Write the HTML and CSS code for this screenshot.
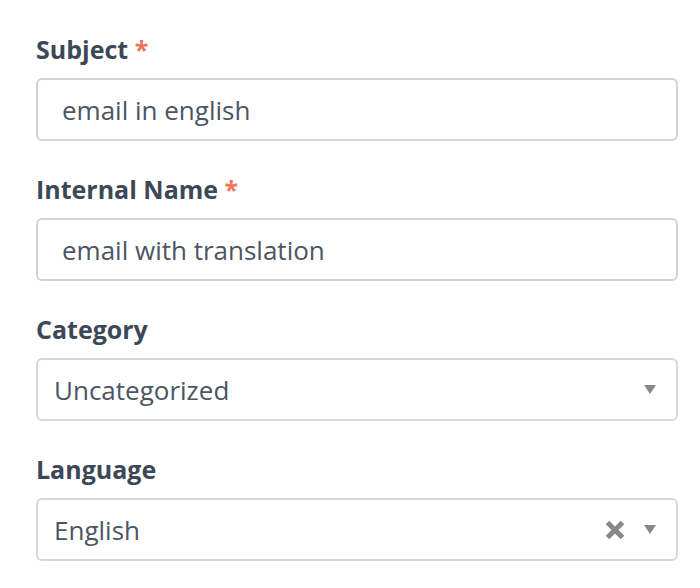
FILE: index.html
```html
<!DOCTYPE html>
<html>

<head>
    <meta charset="UTF-8">
    <meta name="viewport" content="width=device-width, initial-scale=1.0">
    <title>Email settings</title>
    <link rel="stylesheet" href="styles.css">
</head>

<body>
    <form class="form">
        <div class="field">
            <label for="subject">Subject <span class="required">*</span></label>
            <input type="text" id="subject" class="text-input" value="email in english">
        </div>
        <div class="field">
            <label for="internalName">Internal Name <span class="required">*</span></label>
            <input type="text" id="internalName" class="text-input" value="email with translation">
        </div>
        <div class="field">
            <label>Category</label>
            <div class="select">
                <span class="select-value">Uncategorized</span>
                <span class="arrow"></span>
            </div>
        </div>
        <div class="field">
            <label>Language</label>
            <div class="select">
                <span class="select-value">English</span>
                <svg class="clear" width="20" height="20" viewBox="0 0 20 20">
                    <path d="M2.5 2.5 L17.5 17.5 M17.5 2.5 L2.5 17.5" stroke="#888" stroke-width="5" />
                </svg>
                <span class="arrow"></span>
            </div>
        </div>
    </form>
</body>

</html>
```

FILE: styles.css
```css
body {
    margin: 0;
    font-family: "Open Sans", Arial, sans-serif;
    background-color: white;
}

.form {
    width: 642px;
    padding: 31px 0 0 36px;
}

.field {
    margin-bottom: 30px;
}

.field label {
    display: block;
    font-size: 25px;
    line-height: 36px;
    font-weight: 700;
    color: #3d4857;
    margin-bottom: 11px;
}

.required {
    color: #ec7558;
}

.text-input {
    display: block;
    box-sizing: border-box;
    width: 100%;
    height: 63px;
    padding: 0 24px;
    border: 2px solid #d3d3d3;
    border-radius: 6px;
    font-family: "Open Sans", Arial, sans-serif;
    font-size: 26px;
    color: #4b5563;
    outline: none;
}

.select {
    display: flex;
    align-items: center;
    box-sizing: border-box;
    height: 63px;
    padding: 0 20px 0 16px;
    border: 2px solid #d8d8d8;
    border-radius: 6px;
    font-size: 26px;
    color: #4b5563;
}

.select-value {
    flex: 1;
}

.clear {
    margin-right: 19px;
}

.arrow {
    width: 0;
    height: 0;
    border-left: 6px solid transparent;
    border-right: 6px solid transparent;
    border-top: 9px solid #888;
}
```
